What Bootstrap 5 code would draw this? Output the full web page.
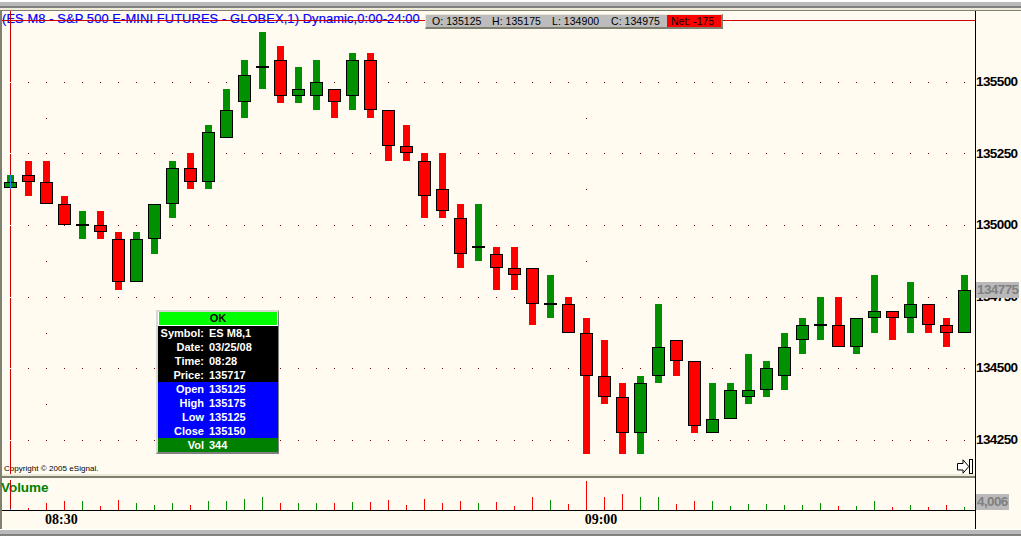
<!DOCTYPE html>
<html lang="en">
<head>
<meta charset="utf-8">
<title>ES M8 chart</title>
<link href="https://cdn.jsdelivr.net/npm/bootstrap@5.3.0/dist/css/bootstrap.min.css" rel="stylesheet">
<style>
html,body{margin:0;background:#fff;overflow:hidden}
.win{width:1021px;height:536px;font-family:"Liberation Sans",Arial,sans-serif;line-height:1;color:#000}
.chr-a{height:2px;background:#fff}
.chr-a1{height:1px;background:#fff}
.chr-b{height:4px;background:#b9b9b9}
.chr-c{height:2px;background:#808080}
.chr-d{height:2px;background:#ece9d8}
.chr-e{height:1px;background:#808070}
.main-row{height:518px;background:#fffbf0}
.edge{width:2px;background:#808070}
.plot-col{width:974px;border-right:1px solid #000}
.price-pane{height:463px}
.pane-svg{display:block;width:973px}
.pane-over{position:absolute;left:0;top:0;pointer-events:none}
.pane-sep{height:4px;background:linear-gradient(#ece9d8 0 2px,#808070 2px 4px)}
.vol-pane{height:33px}
.time-row{height:18px;font-family:"Liberation Serif","Times New Roman",serif;font-weight:700;font-size:14px;line-height:18px;padding-left:43px}
.time-row span+span{margin-left:507px}
.chart-title{left:0;top:0;color:#00f;font-size:12.9px;letter-spacing:.1px;white-space:nowrap;line-height:16px;-webkit-text-stroke:.2px #00f}
.ohlc-box{left:423px;top:3px;width:298px;height:15px;background:#bcbcbc;border-top:1px solid #ece9d8;border-left:1px solid #ece9d8;border-right:2px solid #808070;border-bottom:2px solid #808070;font-size:10.5px;line-height:12px;padding-left:6px}
.ohlc-item{width:60px;letter-spacing:.05px;white-space:nowrap}
.ohlc-item:nth-child(3){width:59px}
.ohlc-item:nth-child(4){width:56px}
.ohlc-net{width:54px;height:12px;background:#f00;padding-left:4px;white-space:nowrap}
.crs-tip{left:154px;top:299px;width:123px;height:144px;border-style:solid;border-width:2px 1px 2px 2px;border-color:#d8d8d0 #808080 #808080 #d8d8d0;font-size:11px;font-weight:700;color:#fff}
.crs-row{height:14px;line-height:14px}
.crs-ok{background:#0f0;color:#000;text-align:center;border:1px solid #fff;border-top:0;height:14px;line-height:13px}
.crs-black{background:#000}
.crs-blue{background:#00f}
.crs-green{background:#008000}
.crs-lab{width:46px;text-align:right;white-space:nowrap}
.crs-val{margin-left:5px;white-space:nowrap}
.copy-note{left:2px;top:452px;font-size:8px;line-height:11px;white-space:nowrap;letter-spacing:.04px}
.jump-ico{left:955px;top:448px;width:18px;height:16px;display:block}
.vol-title{left:-1px;top:3px;color:#008000;font-weight:700;font-size:13.5px;line-height:14px;letter-spacing:-.05px}
.axis-col{width:45px;font-size:13.5px;font-weight:700;letter-spacing:-.6px}
.axis-list{padding-top:35px}
.axis-tick{height:71.6px;display:flex;align-items:flex-start;line-height:14px;padding-top:29px}
.axis-tag{background:#b9b9b9;color:#808080;line-height:16px;height:16px;left:0}
.tag-last{top:271px;width:43px;padding-left:1px}
.tag-vol{top:483px;width:33px;padding-left:1px}
</style>
</head>
<body>
<div class="win d-flex flex-column">
  <div class="chr-a"></div><div class="chr-b"></div><div class="chr-c"></div><div class="chr-d"></div><div class="chr-e"></div>
  <div class="main-row d-flex">
    <div class="edge"></div>
    <div class="plot-col d-flex flex-column">
      <div class="price-pane position-relative">
        <svg id="priceSvg" class="pane-svg" height="463" viewBox="2 11 973 463" shape-rendering="crispEdges" aria-hidden="true"></svg>
        <div class="chart-title position-absolute">(ES M8 - S&amp;P 500 E-MINI FUTURES - GLOBEX,1) Dynamic,0:00-24:00</div>
        <div class="copy-note position-absolute">Copyright © 2005 eSignal.</div>
        <svg id="crossSvg" class="pane-svg pane-over" height="463" viewBox="2 11 973 463" shape-rendering="crispEdges" aria-hidden="true"></svg>
        <div class="ohlc-box position-absolute d-flex">
          <span class="ohlc-item">O: 135125</span><span class="ohlc-item">H: 135175</span><span class="ohlc-item">L: 134900</span><span class="ohlc-item">C: 134975</span><span class="ohlc-net">Net: -175</span>
        </div>
        <div class="crs-tip position-absolute">
          <div class="crs-ok">OK</div>
          <div class="crs-black">
            <div class="crs-row d-flex"><span class="crs-lab">Symbol:</span><span class="crs-val">ES M8,1</span></div>
            <div class="crs-row d-flex"><span class="crs-lab">Date:</span><span class="crs-val">03/25/08</span></div>
            <div class="crs-row d-flex"><span class="crs-lab">Time:</span><span class="crs-val">08:28</span></div>
            <div class="crs-row d-flex"><span class="crs-lab">Price:</span><span class="crs-val">135717</span></div>
          </div>
          <div class="crs-blue">
            <div class="crs-row d-flex"><span class="crs-lab">Open</span><span class="crs-val">135125</span></div>
            <div class="crs-row d-flex"><span class="crs-lab">High</span><span class="crs-val">135175</span></div>
            <div class="crs-row d-flex"><span class="crs-lab">Low</span><span class="crs-val">135125</span></div>
            <div class="crs-row d-flex"><span class="crs-lab">Close</span><span class="crs-val">135150</span></div>
          </div>
          <div class="crs-green crs-row d-flex"><span class="crs-lab">Vol</span><span class="crs-val">344</span></div>
        </div>
        <svg class="jump-ico position-absolute" viewBox="957 459 18 16" aria-hidden="true">
          <path d="M957.5 463.5H963V459.8L968.8 466.5L963 473.2V470H957.5Z" fill="#fff" stroke="#000" stroke-width="1"/>
          <rect x="969.5" y="459.5" width="3" height="14" fill="#fff" stroke="#000" stroke-width="1"/>
        </svg>
      </div>
      <div class="pane-sep"></div>
      <div class="vol-pane position-relative">
        <svg id="volSvg" class="pane-svg" height="33" viewBox="2 478 973 33" shape-rendering="crispEdges" aria-hidden="true"></svg>
        <div class="vol-title position-absolute">Volume</div>
        <svg id="volCross" class="pane-svg pane-over" height="33" viewBox="2 478 973 33" shape-rendering="crispEdges" aria-hidden="true"></svg>
      </div>
      <div class="time-row d-flex"><span>08:30</span><span>09:00</span></div>
    </div>
    <div class="axis-col position-relative">
      <div class="axis-list">
        <div class="axis-tick">135500</div>
        <div class="axis-tick">135250</div>
        <div class="axis-tick">135000</div>
        <div class="axis-tick">134750</div>
        <div class="axis-tick">134500</div>
        <div class="axis-tick">134250</div>
      </div>
      <div class="axis-tag tag-last position-absolute">134775</div>
      <div class="axis-tag tag-vol position-absolute">4,006</div>
    </div>
  </div>
  <div class="chr-a1"></div><div class="chr-b"></div><div class="chr-c"></div>
</div>
<script>
var R='#ff0000',G='#009000';
// wick top, wick bottom, body top, body bottom (equal = doji), colour
var bars=[[175,188,182,188,G],[161,196,175,182,R],[161,204,182,204,R],[196,225,204,225,R],[211,239,225,225,G],[211,239,225,232,R],[232,290,239,282,R],[232,282,239,282,G],[204,254,204,239,G],[161,218,168,204,G],[153,189,168,182,R],[125,189,132,182,G],[89,138,110,138,G],[60,118,75,102,G],[32,89,67,67,G],[46,103,60,96,R],[67,103,89,96,G],[60,110,82,96,G],[89,118,89,102,R],[53,110,60,96,G],[53,118,60,110,R],[110,161,110,146,R],[125,161,146,153,R],[153,218,161,196,R],[153,218,189,211,R],[204,268,218,254,R],[204,261,247,247,G],[247,290,254,268,R],[247,290,268,275,R],[268,325,268,304,R],[275,318,304,304,G],[297,333,304,333,R],[318,454,333,376,R],[340,404,376,397,R],[383,454,397,433,R],[376,454,383,433,G],[304,383,347,376,G],[340,376,340,361,R],[361,433,361,426,R],[383,433,419,433,G],[383,419,390,419,G],[354,404,390,397,G],[361,397,368,390,G],[333,390,347,376,G],[318,354,325,340,G],[297,340,325,325,G],[297,347,325,347,R],[318,354,318,347,G],[275,333,311,318,G],[311,340,311,318,R],[282,333,304,318,G],[304,333,304,325,R],[318,347,325,333,R],[275,333,290,333,G]];
var vols=[[508,R],[503,R],[501,R],[501,G],[506,R],[500,R],[503,G],[505,G],[503,G],[505,R],[501,G],[501,G],[499,G],[497,G],[503,R],[503,G],[503,G],[503,R],[502,G],[502,R],[500,R],[505,R],[499,R],[503,R],[501,R],[503,G],[502,R],[506,R],[497,R],[500,G],[504,R],[481,R],[497,R],[494,R],[497,G],[497,G],[504,R],[501,R],[501,G],[506,G],[504,G],[504,G],[505,G],[505,G],[503,G],[506,R],[506,G],[501,G],[507,R],[505,G],[507,R],[505,R],[507,G]];
function rect(x,y,w,h,f,extra){return '<rect x="'+x+'" y="'+y+'" width="'+w+'" height="'+h+'" fill="'+f+'"'+(extra||'')+'/>';}
var s='',i,k;
var lines=[82,153,225,297,368,440];
for(k=0;k<lines.length;k++){for(i=28;i<=964;i+=18){s+=rect(i,lines[k],1,1,'#800000');}}
var mid=[118,189,261,333,404];
for(k=0;k<mid.length;k++){s+=rect(46,mid[k],1,1,'#800000');s+=rect(586,mid[k],1,1,'#800000');}
for(i=0;i<bars.length;i++){
  var b=bars[i],c=10+18*i;
  s+=rect(c-3,b[0],7,b[1]-b[0],b[4]);
  if(b[2]===b[3]){s+=rect(c-6,b[2]-1,13,2,'#000');}
  else{s+=rect(c-5.5,b[2]+.5,12,b[3]-b[2]-1,b[4],' stroke="#000" stroke-width="1"');}
}
document.getElementById('priceSvg').innerHTML=s;
var o=rect(2,20,973,1,'#d00000')+rect(10,11,1,463,'#d00000')+rect(10,175,1,14,'#2080ff');
for(k=0;k<lines.length;k++){o+=rect(10,lines[k],1,1,'#fff');}
document.getElementById('crossSvg').innerHTML=o;
var v=rect(2,510,973,1,'#000')+rect(226,474,1,2,R);
for(i=0;i<vols.length;i++){v+=rect(28+18*i,vols[i][0],1,510-vols[i][0],vols[i][1]);}
document.getElementById('volSvg').innerHTML=v;
document.getElementById('volCross').innerHTML=rect(10,480,1,29,'#d00000')+rect(10,509,1,1,'#2080ff');
</script>
<script src="https://cdn.jsdelivr.net/npm/bootstrap@5.3.0/dist/js/bootstrap.bundle.min.js"></script>
</body>
</html>
